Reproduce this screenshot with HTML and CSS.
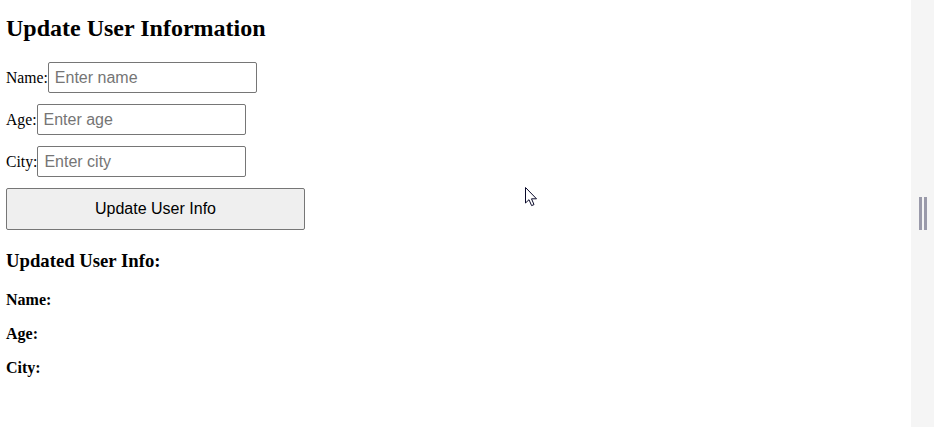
FILE: index.html
```html
<!DOCTYPE html>
<html lang="en">
<head>
<meta charset="utf-8">
<title>Update User Information</title>
<link rel="stylesheet" href="styles.css">
</head>
<body>
<main class="page">
  <h2 class="title">Update User Information</h2>
  <form class="form">
    <div class="row"><label class="label" for="name">Name:</label><input class="field" id="name" type="text" placeholder="Enter name"></div>
    <div class="row"><label class="label" for="age">Age:</label><input class="field" id="age" type="text" placeholder="Enter age"></div>
    <div class="row"><label class="label" for="city">City:</label><input class="field" id="city" type="text" placeholder="Enter city"></div>
    <button class="btn" type="button">Update User Info</button>
  </form>
  <h3 class="subtitle">Updated User Info:</h3>
  <p class="info"><strong>Name:</strong></p>
  <p class="info"><strong>Age:</strong></p>
  <p class="info"><strong>City:</strong></p>
  <svg class="cursor" width="13" height="21" viewBox="0 0 13 21" aria-hidden="true">
    <path d="M0.5 0.5 L0.5 16 L4 12.7 L6.6 18.6 L9 17.6 L6.5 11.8 L11.5 11.8 Z" fill="#fff" stroke="#0a0a2a" stroke-width="1" stroke-linejoin="miter"/>
  </svg>
</main>
<aside class="scrollbar">
  <div class="grip"><span class="grip-bar"></span><span class="grip-bar"></span></div>
</aside>
</body>
</html>
```
FILE: styles.css
```css
html, body {
  margin: 0;
  padding: 0;
  height: 100%;
  background: #ffffff;
}
body {
  display: flex;
  font-family: "Liberation Serif", "Times New Roman", serif;
  color: #000;
  overflow: hidden;
}
.page {
  flex: 1;
  position: relative;
  padding: 14px 6px 0 6px;
}
.title {
  margin: 0 0 20px 0;
  font-size: 24px;
  line-height: 28px;
  font-weight: bold;
}
.form {
  display: flex;
  flex-direction: column;
  align-items: flex-start;
  gap: 11px;
  margin: 0;
}
.row {
  display: flex;
  align-items: baseline;
}
.label {
  font-size: 15.7px;
}
.field {
  box-sizing: border-box;
  width: 209px;
  height: 31px;
  margin: 0;
  padding: 0 5px 0 6px;
  border: 1px solid #767676;
  border-radius: 2px;
  font-family: "Liberation Sans", Arial, sans-serif;
  font-size: 16px;
  color: #000;
  background: #fff;
}
.field::placeholder {
  color: #757575;
}
.btn {
  box-sizing: border-box;
  width: 299px;
  height: 42px;
  margin: 0;
  padding: 0;
  border: 1px solid #767676;
  border-radius: 2px;
  background: #efefef;
  font-family: "Liberation Sans", Arial, sans-serif;
  font-size: 16px;
  color: #000;
}
.subtitle {
  margin: 20px 0 19px 0;
  font-size: 18.72px;
  line-height: 22px;
  font-weight: bold;
}
.info {
  margin: 0 0 16px 0;
  font-size: 16px;
  line-height: 18px;
}
.cursor {
  position: absolute;
  left: 525px;
  top: 187px;
}
.scrollbar {
  width: 23px;
  height: 100%;
  background: #f5f5f5;
  display: flex;
  flex-direction: column;
  align-items: center;
}
.grip {
  margin-top: 197px;
  display: flex;
  gap: 2px;
}
.grip-bar {
  display: block;
  width: 3px;
  height: 33px;
  background: #9a9aaa;
}
```
